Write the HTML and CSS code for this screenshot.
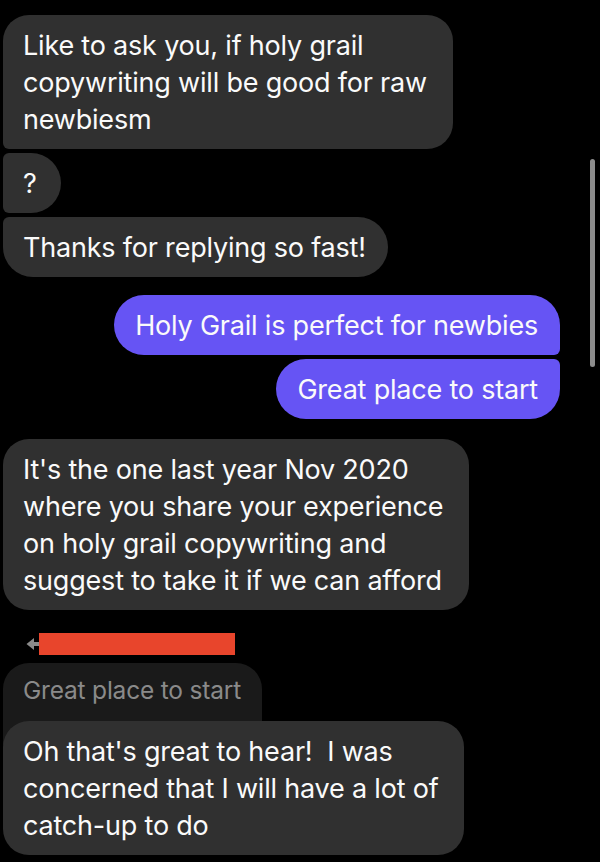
FILE: index.html
```html
<!DOCTYPE html>
<html>
<head>
<meta charset="utf-8">
<link rel="stylesheet" href="styles.css">
</head>
<body>
<div class="chat">
  <div class="bubble in first">Like to ask you, if holy grail<br>copywriting will be good for raw<br>newbiesm</div>
  <div class="bubble in middle q">?</div>
  <div class="bubble in last">Thanks for replying so fast!</div>

  <div class="bubble out first gap-lg">Holy Grail is perfect for newbies</div>
  <div class="bubble out last">Great place to start</div>

  <div class="bubble in single gap-lg2">It's the one last year Nov 2020<br>where you share your experience<br>on holy grail copywriting and<br>suggest to take it if we can afford</div>

  <div class="reply-head">
    <svg class="reply-icon" width="13" height="14" viewBox="0 0 13 14"><path d="M0.5 7 L8 1 L8 5 L13 5 L13 9 L8 9 L8 13 Z" fill="#8a8a8a"/></svg>
    <div class="redact"></div>
  </div>
  <div class="quote">Great place to start</div>
  <div class="bubble in single reply">Oh that's great to hear!&nbsp; I was<br>concerned that I will have a lot of<br>catch-up to do</div>
</div>
<div class="scrollbar"></div>
</body>
</html>
```
FILE: styles.css
```css
html, body {
  margin: 0;
  padding: 0;
  background: #000;
}
body {
  width: 600px;
  height: 862px;
  overflow: hidden;
  position: relative;
  font-family: Inter, "Liberation Sans", Arial, sans-serif;
}
.chat {
  display: flex;
  flex-direction: column;
  gap: 4px;
  padding: 15px 40px 0 3px;
}
.bubble {
  font-size: 27px;
  line-height: 37px;
  letter-spacing: -0.2px;
  color: #fafafa;
  padding: 11.5px 26px 11.5px 20px;
  white-space: nowrap;
  border-radius: 28px;
}
.in {
  align-self: flex-start;
  background: #303030;
}
.out {
  align-self: flex-end;
  background: #6654f4;
  padding: 11.5px 22px 11.5px 21px;
}
.in.first { border-radius: 26px 26px 26px 6px; }
.in.middle { border-radius: 6px 30px 30px 6px; }
.in.last { border-radius: 6px 30px 30px 30px; }
.out.first { border-radius: 30px 30px 6px 30px; }
.out.last { border-radius: 30px 6px 30px 30px; }
.in.single { border-radius: 26px; }
.q { padding-right: 24px; }
.in.last { padding-right: 22px; }
.gap-lg { margin-top: 14px; }
.gap-lg2 { margin-top: 16px; }

.reply-head {
  display: flex;
  align-items: center;
  margin-top: 19px;
  padding-left: 23px;
  height: 22px;
}
.reply-icon {
  display: block;
}
.redact {
  width: 196px;
  height: 22px;
  background: #e8452c;
}
.quote {
  align-self: flex-start;
  margin-top: 4px;
  background: #1a1a1a;
  color: #8a8a8a;
  font-size: 24.5px;
  letter-spacing: -0.2px;
  line-height: 30px;
  padding: 12px 21px 40px 20px;
  border-radius: 26px 26px 0 0;
  white-space: nowrap;
}
.reply {
  position: relative;
  margin-top: -28px;
}
.scrollbar {
  position: absolute;
  left: 590px;
  top: 159px;
  width: 5px;
  height: 208px;
  border-radius: 3px;
  background: #8c8c8c;
}
```
